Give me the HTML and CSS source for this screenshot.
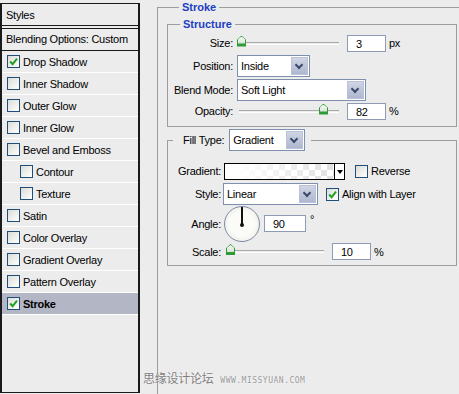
FILE: index.html
```html
<!DOCTYPE html>
<html lang="en">

<head>
    <meta charset="UTF-8">
    <title>Layer Style - Stroke</title>
    <link rel="stylesheet" href="styles.css">
</head>

<body>
    <div id="dialog">
        <div id="stylesPanel">
            <div class="panelTitle">Styles</div>
            <div class="blending">Blending Options: Custom</div>
            <ul class="effects">
                <li><span class="box"><svg viewBox="0 0 10 10"><path d="M2 5 L4.2 7.4 L8.2 2.4"/></svg></span>Drop Shadow</li>
                <li><span class="box"></span>Inner Shadow</li>
                <li><span class="box"></span>Outer Glow</li>
                <li><span class="box"></span>Inner Glow</li>
                <li><span class="box"></span>Bevel and Emboss</li>
                <li class="sub"><span class="box"></span>Contour</li>
                <li class="sub"><span class="box"></span>Texture</li>
                <li><span class="box"></span>Satin</li>
                <li><span class="box"></span>Color Overlay</li>
                <li><span class="box"></span>Gradient Overlay</li>
                <li><span class="box"></span>Pattern Overlay</li>
                <li class="selected"><span class="box"><svg viewBox="0 0 10 10"><path d="M2 5 L4.2 7.4 L8.2 2.4"/></svg></span>Stroke</li>
            </ul>
        </div>

        <div id="settings">
            <fieldset class="strokeGroup">
                <legend class="groupTitle">Stroke</legend>

                <fieldset class="structure">
                    <legend class="groupTitle">Structure</legend>

                    <div class="row sizeRow">
                        <span class="label">Size:</span>
                        <div class="slider"><span class="thumb" style="left: 0%"></span></div>
                        <span class="field">3</span>
                        <span class="unit">px</span>
                    </div>
                    <div class="row positionRow">
                        <span class="label">Position:</span>
                        <div class="select positionSelect">
                            <span class="value">Inside</span>
                            <span class="arrow"></span>
                        </div>
                    </div>
                    <div class="row blendRow">
                        <span class="label">Blend Mode:</span>
                        <div class="select blendSelect">
                            <span class="value">Soft Light</span>
                            <span class="arrow"></span>
                        </div>
                    </div>
                    <div class="row opacityRow">
                        <span class="label">Opacity:</span>
                        <div class="slider"><span class="thumb" style="left: 82%"></span></div>
                        <span class="field">82</span>
                        <span class="unit">%</span>
                    </div>
                </fieldset>

                <fieldset class="fill">
                    <legend class="fillLegend">
                        <span class="legendLabel">Fill Type:</span>
                        <div class="select fillSelect">
                            <span class="value">Gradient</span>
                            <span class="arrow"></span>
                        </div>
                    </legend>

                    <div class="row gradientRow">
                        <span class="label">Gradient:</span>
                        <div class="swatch">
                            <span class="ramp"></span>
                            <span class="swatchArrow"></span>
                        </div>
                        <span class="box plain"></span>
                        <span class="checkLabel">Reverse</span>
                    </div>
                    <div class="row styleRow">
                        <span class="label">Style:</span>
                        <div class="select styleSelect">
                            <span class="value">Linear</span>
                            <span class="arrow"></span>
                        </div>
                        <span class="box plain"><svg viewBox="0 0 10 10"><path d="M2 5 L4.2 7.4 L8.2 2.4"/></svg></span>
                        <span class="checkLabel">Align with Layer</span>
                    </div>
                    <div class="row angleRow">
                        <span class="label">Angle:</span>
                        <div class="dial"><span class="needle"></span></div>
                        <span class="field angleField">90</span>
                        <span class="degree">&deg;</span>
                    </div>
                    <div class="row scaleRow">
                        <span class="label">Scale:</span>
                        <div class="slider scaleSlider"><span class="thumb" style="left: 0%"></span></div>
                        <span class="field">10</span>
                        <span class="unit">%</span>
                    </div>
                </fieldset>
            </fieldset>
        </div>

        <div id="watermark">
            <span class="cn">思缘设计论坛</span>
            <span class="url">WWW.MISSYUAN.COM</span>
        </div>
    </div>
</body>

</html>
```

FILE: styles.css
```css
* {
    box-sizing: border-box;
}

body {
    margin: 0;
    background-color: #ececec;
    font-family: 'Liberation Sans', Arial, sans-serif;
    font-size: 11px;
    letter-spacing: -0.25px;
    color: #000;
}

#dialog {
    position: relative;
    display: flex;
    width: 459px;
    height: 394px;
    overflow: hidden;
}

/* left list of effects */

#stylesPanel {
    width: 140px;
    height: 390px;
    margin-top: 3px;
    flex-shrink: 0;
    border: 1px solid #1a1a1a;
    border-width: 1px 2px 1px 2px;
}

.panelTitle {
    height: 25px;
    padding: 5px 4px;
    border-bottom: 4px double #1a1a1a;
}

.blending {
    height: 22px;
    line-height: 21px;
    padding-left: 4px;
    border-bottom: 1px solid #1a1a1a;
}

.effects {
    list-style: none;
    margin: 0;
    padding: 0;
}

.effects li {
    display: flex;
    align-items: center;
    height: 22px;
    padding-left: 5px;
    border-bottom: 1px solid #fff;
}

.effects li.sub {
    padding-left: 18px;
}

.effects li.selected {
    background-color: #b3b6c5;
    font-weight: bold;
}

.box {
    display: inline-block;
    width: 13px;
    height: 13px;
    margin-right: 3px;
    border: 1px solid #1f4e7a;
    background: linear-gradient(135deg, #dcdcd6, #fff);
}

.box svg {
    display: block;
    width: 11px;
    height: 11px;
}

.box path {
    fill: none;
    stroke: #21a121;
    stroke-width: 1.8;
}

/* right side */

#settings {
    flex: 1;
}

fieldset {
    margin: 0;
    border: 1px solid #9d9d9d;
    min-width: 0;
}

.groupTitle {
    margin-left: 12px;
    padding: 0 3px;
    height: 14px;
    line-height: 14px;
    font-weight: bold;
    letter-spacing: 0;
    color: #1c3fc4;
}

.strokeGroup {
    margin-left: 17px;
    height: 400px;
    padding: 3px 2px 0 9px;
    border-right: none;
    border-bottom: none;
}

.structure {
    padding: 1px 0 6px 0;
}

.row {
    display: flex;
    align-items: center;
    height: 22px;
}

.label {
    width: 65px;
    margin-right: 4px;
    text-align: right;
}

.positionRow {
    margin-top: 1px;
}

.blendRow {
    margin-top: 2px;
}

.opacityRow {
    height: 18px;
    margin-top: 1px;
}

.slider {
    position: relative;
    width: 100px;
    height: 3px;
    margin: 0 8px 0 2px;
    border-top: 1px solid #a9a9a9;
    border-bottom: 1px solid #fff;
}

.thumb {
    position: absolute;
    top: -7px;
    width: 9px;
    height: 11px;
    margin-left: -2px;
    background-color: #2f9b37;
    clip-path: polygon(50% 0, 100% 38%, 100% 100%, 0 100%, 0 38%);
}

.thumb::after {
    content: "";
    position: absolute;
    left: 1px;
    top: 1px;
    width: 7px;
    height: 7px;
    background: linear-gradient(#fafcf8, #d6e2d2);
    clip-path: polygon(50% 0, 100% 40%, 100% 100%, 0 100%, 0 40%);
}

.field {
    width: 39px;
    height: 17px;
    padding: 2px 8px;
    line-height: 12px;
    background-color: #fff;
    border: 1px solid #8d9bb5;
}

.unit {
    margin-left: 3px;
}

.select {
    display: flex;
    height: 22px;
    background-color: #fff;
    border: 1px solid #7f8fae;
}

.select .value {
    flex: 1;
    padding: 4px 3px 0 3px;
}

.select .arrow {
    width: 17px;
    margin: 1px;
    background: linear-gradient(#cfd5e4, #aeb7cf);
    border: 1px solid #b9c2d7;
    position: relative;
}

.select .arrow::after {
    content: "";
    position: absolute;
    left: 4px;
    top: 4px;
    width: 4px;
    height: 4px;
    border: solid #3b4a6b;
    border-width: 0 2px 2px 0;
    transform: rotate(45deg);
}

.positionSelect {
    width: 73px;
}

.blendSelect {
    width: 129px;
}

/* fill type group */

.fill {
    margin-top: 2px;
    padding: 10px 0 5px 0;
}

.fillLegend {
    display: flex;
    align-items: center;
    margin-left: 5px;
    padding: 0 6px 0 0;
    height: 22px;
}

.legendLabel {
    margin: 0 5px 0 10px;
}

.fillSelect {
    width: 76px;
}

.fill .label {
    width: 53px;
    margin-right: 2px;
}

.gradientRow {
    height: 20px;
}

.swatch {
    display: flex;
    width: 121px;
    height: 17px;
    margin: 0 10px 0 1px;
    border: 1px solid #000;
    background-color: #fff;
}

.ramp {
    flex: 1;
    background:
        linear-gradient(to right, #fff 10%, rgba(255, 255, 255, 0.2)),
        repeating-conic-gradient(#d9d9d9 0 25%, #fff 0 50%) 0 0 / 12px 12px;
}

.swatchArrow {
    width: 10px;
    border-left: 1px solid #000;
    position: relative;
    background-color: #fff;
}

.swatchArrow::after {
    content: "";
    position: absolute;
    left: 2px;
    top: 6px;
    border: 3px solid transparent;
    border-top: 4px solid #000;
}

.box.plain {
    margin-right: 3px;
}

.styleRow {
    margin-top: 2px;
}

.styleSelect {
    width: 95px;
    margin-right: 8px;
}

.angleRow {
    height: 37px;
}

.dial {
    position: relative;
    width: 36px;
    height: 36px;
    margin-left: 1px;
    border: 1px solid #7d88a6;
    border-radius: 50%;
    background: radial-gradient(circle at 50% 50%, #fbfbf7 50%, #e6e6e0);
}

.needle {
    position: absolute;
    left: 16px;
    top: 0;
    width: 2px;
    height: 18px;
    background-color: #111;
}

.needle::after {
    content: "";
    position: absolute;
    left: -1px;
    bottom: -2px;
    width: 4px;
    height: 4px;
    border-radius: 50%;
    background-color: #111;
}

.angleField {
    width: 42px;
    margin-left: 4px;
}

.degree {
    align-self: flex-start;
    margin: 8px 0 0 4px;
}

.scaleRow {
    height: 17px;
    margin-top: 1px;
}

.scaleSlider {
    width: 96px;
    margin: 0 8px 0 5px;
}

/* overlay text of the source image */

#watermark {
    position: absolute;
    left: 143px;
    top: 369px;
    color: #808080;
    text-shadow: 0 0 2px #fff;
}

#watermark .cn {
    font-family: 'Noto Sans CJK SC', sans-serif;
    font-size: 12px;
}

#watermark .url {
    margin-left: 4px;
    font-family: 'DejaVu Sans Mono', monospace;
    font-size: 8px;
    letter-spacing: 0.5px;
    color: #9a9a9a;
}
```
